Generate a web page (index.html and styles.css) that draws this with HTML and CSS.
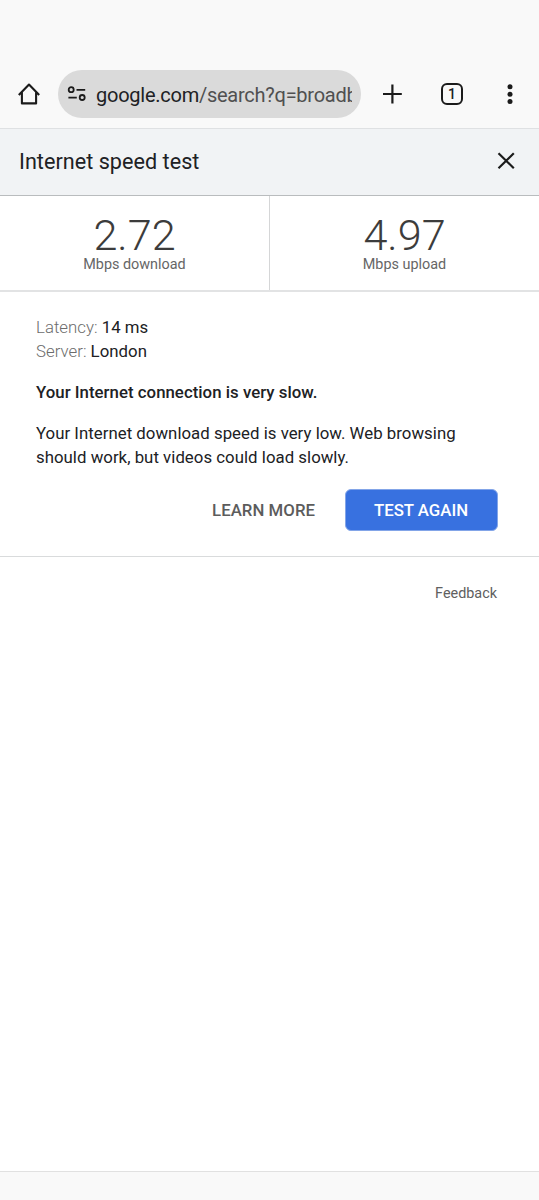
FILE: index.html
```html
<!DOCTYPE html>
<html lang="en">
<head>
<meta charset="utf-8">
<title>Internet speed test</title>
<link rel="stylesheet" href="styles.css">
</head>
<body>
<header class="toolbar">
  <svg class="home" viewBox="0 0 24 24" width="24" height="24"><path d="M4.9 10.2V21.4H19.1V10.2M1.8 13L12 2.6L22.2 13"/></svg>
  <div class="omnibox">
    <svg class="tune" viewBox="0 0 20 18" width="20" height="18"><circle cx="4.2" cy="4.7" r="2.5"/><path d="M9.5 4.9H18.2M1.4 12.6H9.8"/><circle cx="15.2" cy="12.5" r="2.5"/></svg>
    <div class="url">google.com<span class="path">/search?q=broadb</span></div>
  </div>
  <svg class="plus" viewBox="0 0 20 20" width="20" height="20"><path d="M10.4 .6V19.4M1 10H19.8"/></svg>
  <div class="tabs">1</div>
  <svg class="menu" viewBox="0 0 6 22" width="6" height="22"><circle cx="3" cy="3.8" r="2.5"/><circle cx="3" cy="11.2" r="2.5"/><circle cx="3" cy="18.5" r="2.5"/></svg>
</header>
<main class="page">
  <div class="titlebar">
    <h1 class="title">Internet speed test</h1>
    <svg class="close" viewBox="0 0 18 18" width="18" height="18"><path d="M1.5 1.2L16.8 16.3M16.8 1.2L1.5 16.3"/></svg>
  </div>
  <div class="results">
    <div class="result"><span class="value">2.72</span><span class="unit">Mbps download</span></div>
    <div class="result"><span class="value">4.97</span><span class="unit">Mbps upload</span></div>
  </div>
  <section class="details">
    <p class="line"><span class="label">Latency: </span>14 ms</p>
    <p class="line"><span class="label">Server: </span>London</p>
    <p class="summary">Your Internet connection is very slow.</p>
    <p class="advice">Your Internet download speed is very low. Web browsing<br>should work, but videos could load slowly.</p>
    <div class="actions">
      <a class="learn">LEARN MORE</a>
      <button class="again">TEST AGAIN</button>
    </div>
  </section>
  <div class="feedback"><a class="feedback-link">Feedback</a></div>
</main>
<footer class="navbar"></footer>
</body>
</html>
```
FILE: styles.css
```css
* { box-sizing: border-box; }
body {
  margin: 0;
  height: 1200px;
  display: flex;
  flex-direction: column;
  background: #fff;
  color: #202124;
  font-family: Roboto, sans-serif;
  overflow: hidden;
}
svg { display: block; flex: none; fill: none; stroke: #1b1b1b; stroke-width: 2.2; }
.toolbar {
  height: 129px;
  padding: 70px 26px 10px 17px;
  display: flex;
  align-items: center;
  background: #f9f9f9;
  border-bottom: 1px solid #dfe1e3;
}
.home { stroke-linejoin: round; stroke-width: 2.1; }
.omnibox {
  width: 303px;
  height: 48px;
  margin-left: 17px;
  padding: 0 9px;
  border-radius: 24px;
  background: #dadada;
  display: flex;
  align-items: center;
}
.tune { stroke-width: 1.8; }
.url {
  width: 256px;
  margin-left: 9px;
  margin-top: 2px;
  overflow: hidden;
  white-space: nowrap;
  font-size: 20px;
  line-height: 28px;
  letter-spacing: -0.25px;
}
.path { color: #505050; }
.plus { margin-left: 21px; }
.tabs {
  width: 23px;
  height: 22px;
  margin-left: 39px;
  border: 2px solid #1b1b1b;
  border-radius: 6px;
  font-size: 14px;
  font-weight: 500;
  line-height: 18px;
  text-align: center;
}
.menu { margin-left: 44px; fill: #1b1b1b; stroke: none; }
.page { flex: 1; }
.titlebar {
  height: 67px;
  padding: 0 24px 2px 19px;
  display: flex;
  align-items: center;
  justify-content: space-between;
  background: #f1f3f5;
  border-bottom: 1px solid #b9bcbe;
}
.title { margin: 2px 0 0; font-size: 21.6px; line-height: 28px; font-weight: 400; letter-spacing: 0.03px; }
.results { display: flex; height: 96px; border-bottom: 2px solid #e2e3e4; }
.result { flex: 1; display: flex; flex-direction: column; align-items: center; padding-top: 18px; }
.result + .result { border-left: 1px solid #d5d6d7; }
.value { font-size: 43.2px; font-weight: 300; line-height: 43px; color: #3c3c3c; }
.unit { font-size: 14.4px; line-height: 15px; color: #666; }
.details {
  height: 265px;
  padding: 23px 41px 0 36px;
  font-size: 16.8px;
  line-height: 24px;
  letter-spacing: 0.03px;
  border-bottom: 1px solid #d9dbdc;
}
.line, .summary, .advice { margin: 0; white-space: nowrap; }
.label { font-weight: 300; color: #6c6c6c; }
.summary { margin-top: 17px; font-weight: 500; }
.advice { margin-top: 17px; }
.actions { display: flex; justify-content: flex-end; align-items: center; margin-top: 20px; }
.learn { color: #5c5c5c; font-size: 16.8px; font-weight: 500; margin-right: 30px; }
.again {
  width: 153px;
  height: 42px;
  padding: 0 1px 0 0;
  border: 1px solid #83a5e8;
  border-radius: 6px;
  background: #3871e0;
  color: #fff;
  font: 500 16.8px/24px Roboto, sans-serif;
}
.feedback { display: flex; justify-content: flex-end; padding: 25px 42px 0 0; }
.feedback-link { font-size: 14.4px; line-height: 24px; color: #606060; }
.navbar { height: 29px; background: #f9f9f9; border-top: 1px solid #e1e1e1; }
```
